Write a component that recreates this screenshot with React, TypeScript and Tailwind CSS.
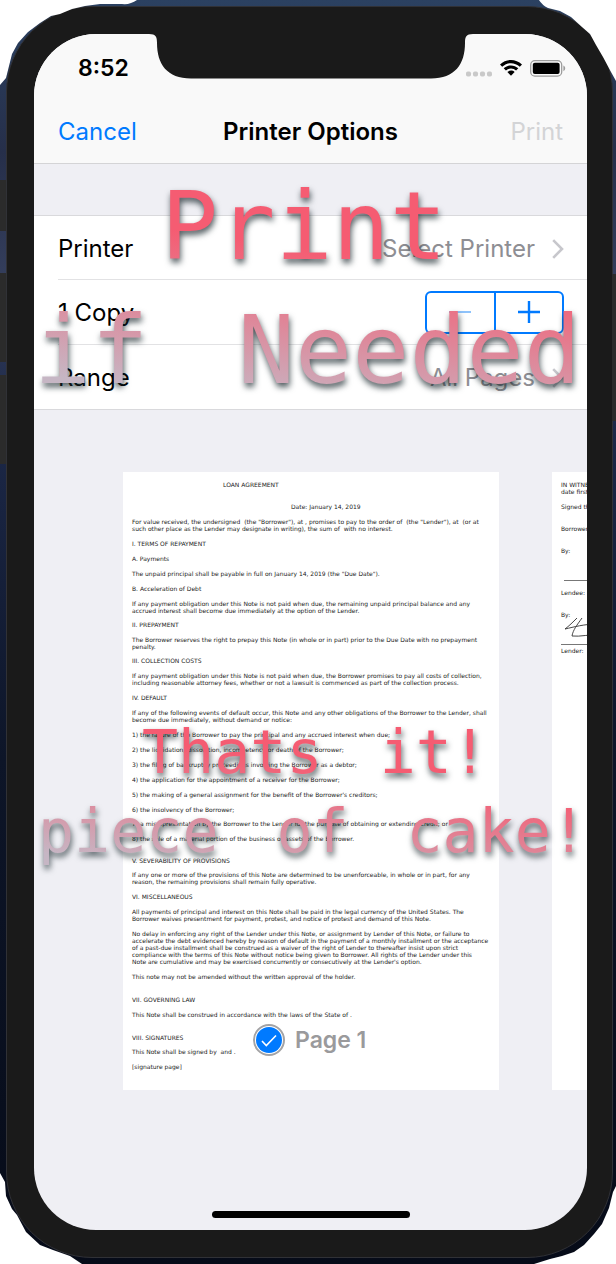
import React from "react";

const SANS = "font-[Inter,'Liberation_Sans',sans-serif]";
const MONO = "font-['DejaVu_Sans_Mono',monospace]";
const PAPER =
  "w-[376px] shrink-0 whitespace-pre bg-white px-[9px] pb-[20px] pt-[9px] font-['DejaVu_Sans',sans-serif] text-[6px] leading-[7px] text-[#222]";

type Block = { lines: string[]; space: string };

const tight = "mt-[7px]";
const normal = "mt-[8px]";
const loose = "mt-[16px]";

const agreement: Block[] = [
  { space: "pl-[91px]", lines: ["LOAN AGREEMENT"] },
  { space: "mt-[15px] pl-[159px]", lines: ["Date: January 14, 2019"] },
  {
    space: normal,
    lines: [
      'For value received, the undersigned  (the "Borrower"), at , promises to pay to the order of  (the "Lender"), at  (or at',
      "such other place as the Lender may designate in writing), the sum of  with no interest.",
    ],
  },
  { space: normal, lines: ["I. TERMS OF REPAYMENT"] },
  { space: normal, lines: ["A. Payments"] },
  { space: normal, lines: ['The unpaid principal shall be payable in full on January 14, 2019 (the "Due Date").'] },
  { space: normal, lines: ["B. Acceleration of Debt"] },
  {
    space: normal,
    lines: [
      "If any payment obligation under this Note is not paid when due, the remaining unpaid principal balance and any",
      "accrued interest shall become due immediately at the option of the Lender.",
    ],
  },
  { space: tight, lines: ["II. PREPAYMENT"] },
  {
    space: normal,
    lines: [
      "The Borrower reserves the right to prepay this Note (in whole or in part) prior to the Due Date with no prepayment",
      "penalty.",
    ],
  },
  { space: tight, lines: ["III. COLLECTION COSTS"] },
  {
    space: normal,
    lines: [
      "If any payment obligation under this Note is not paid when due, the Borrower promises to pay all costs of collection,",
      "including reasonable attorney fees, whether or not a lawsuit is commenced as part of the collection process.",
    ],
  },
  { space: normal, lines: ["IV. DEFAULT"] },
  {
    space: normal,
    lines: [
      "If any of the following events of default occur, this Note and any other obligations of the Borrower to the Lender, shall",
      "become due immediately, without demand or notice:",
    ],
  },
  { space: normal, lines: ["1) the failure of the Borrower to pay the principal and any accrued interest when due;"] },
  { space: normal, lines: ["2) the liquidation, dissolution, incompetency or death of the Borrower;"] },
  { space: normal, lines: ["3) the filing of bankruptcy proceedings involving the Borrower as a debtor;"] },
  { space: normal, lines: ["4) the application for the appointment of a receiver for the Borrower;"] },
  { space: normal, lines: ["5) the making of a general assignment for the benefit of the Borrower's creditors;"] },
  { space: normal, lines: ["6) the insolvency of the Borrower;"] },
  { space: tight, lines: ["7) a misrepresentation by the Borrower to the Lender for the purpose of obtaining or extending credit; or"] },
  { space: normal, lines: ["8) the sale of a material portion of the business or assets of the Borrower."] },
  { space: "mt-[15px]", lines: ["V. SEVERABILITY OF PROVISIONS"] },
  {
    space: tight,
    lines: [
      "If any one or more of the provisions of this Note are determined to be unenforceable, in whole or in part, for any",
      "reason, the remaining provisions shall remain fully operative.",
    ],
  },
  { space: normal, lines: ["VI. MISCELLANEOUS"] },
  {
    space: normal,
    lines: [
      "All payments of principal and interest on this Note shall be paid in the legal currency of the United States. The",
      "Borrower waives presentment for payment, protest, and notice of protest and demand of this Note.",
    ],
  },
  {
    space: normal,
    lines: [
      "No delay in enforcing any right of the Lender under this Note, or assignment by Lender of this Note, or failure to",
      "accelerate the debt evidenced hereby by reason of default in the payment of a monthly installment or the acceptance",
      "of a past-due installment shall be construed as a waiver of the right of Lender to thereafter insist upon strict",
      "compliance with the terms of this Note without notice being given to Borrower. All rights of the Lender under this",
      "Note are cumulative and may be exercised concurrently or consecutively at the Lender's option.",
    ],
  },
  { space: normal, lines: ["This note may not be amended without the written approval of the holder."] },
  { space: loose, lines: ["VII. GOVERNING LAW"] },
  { space: normal, lines: ["This Note shall be construed in accordance with the laws of the State of ."] },
  { space: loose, lines: ["VIII. SIGNATURES"] },
  { space: tight, lines: ["This Note shall be signed by  and ."] },
  { space: normal, lines: ["[signature page]"] },
];

function Paragraph({ block }: { block: Block }) {
  return (
    <p className={block.space}>
      {block.lines.map((line) => (
        <span key={line} className="block">
          {line}
        </span>
      ))}
    </p>
  );
}

function Chevron() {
  return (
    <svg width="12" height="20" viewBox="0 0 12 20" fill="none" stroke="#c7c7cc" strokeWidth="2.6" aria-hidden="true">
      <path d="M1.2 1.2 L10 10 L1.2 18.8" />
    </svg>
  );
}

function StatusBar() {
  return (
    <div className="flex h-[65px] items-center justify-between pl-[44px] pr-[21px] pt-[3px]">
      <span className="text-[23px] font-semibold leading-[28px]">8:52</span>
      <div className="flex items-center gap-[8px]">
        <svg width="26" height="6" viewBox="0 0 26 6" fill="#c9c9c9" className="mt-[12px]" aria-hidden="true">
          <rect x="0" y="0.5" width="5" height="5" rx="1.8" />
          <rect x="7" y="0.5" width="5" height="5" rx="1.8" />
          <rect x="14" y="0.5" width="5" height="5" rx="1.8" />
          <rect x="21" y="0.5" width="5" height="5" rx="1.8" />
        </svg>
        <svg width="22" height="16" viewBox="0 0 22 16" aria-hidden="true">
          <path d="M0 4.6 C6.2 -1.5 15.8 -1.5 22 4.6 L19.8 6.8 C14.8 2 7.2 2 2.2 6.8 Z" />
          <path d="M3.7 8.3 C7.8 4.4 14.2 4.4 18.3 8.3 L16.1 10.5 C13.2 7.8 8.8 7.8 5.9 10.5 Z" />
          <path d="M7.4 12 C9.4 10.1 12.6 10.1 14.6 12 L11 15.8 Z" />
        </svg>
        <svg width="36" height="17" viewBox="0 0 36 17" aria-hidden="true">
          <rect x="0.7" y="0.7" width="31" height="15.4" rx="4.2" fill="none" stroke="#9c9c9c" strokeWidth="1.3" />
          <rect x="2.8" y="2.8" width="26.8" height="11.2" rx="2" />
          <path d="M33.4 5.6 C35.8 6.6 35.8 10.2 33.4 11.2 Z" fill="#9c9c9c" />
        </svg>
      </div>
    </div>
  );
}

function Notch() {
  return (
    <svg
      className="absolute left-1/2 top-0 -translate-x-1/2"
      width="324"
      height="45"
      viewBox="0 0 324 45"
      fill="#1a1a1a"
      aria-hidden="true"
    >
      <path d="M0 0 C7 0 8 3 8 9 C8 30 18 44.500 42 44.500 H282 C306 44.500 316 30 316 9 C316 3 317 0 324 0 Z" />
    </svg>
  );
}

function Preview() {
  return (
    <div className="relative mt-[62px] flex items-stretch gap-[53px] pl-[89px]">
      <div className={PAPER}>
        {agreement.map((block) => (
          <Paragraph key={block.lines[0]} block={block} />
        ))}
      </div>
      <div className={PAPER}>
        <p>{"IN WITNESS WHEREOF, this Note has been executed\ndate first written above."}</p>
        <p className="mt-[8px]">Signed this day</p>
        <p className="mt-[15px]">Borrower:</p>
        <p className="mt-[15px]">By:</p>
        <div className="ml-[3px] mt-[26px] w-[160px] border-t border-[#777]" />
        <p className="mt-[8px]">Lendee:</p>
        <p className="mt-[15px]">By:</p>
        <svg width="60" height="20" viewBox="0 0 60 20" className="ml-[3px]" fill="none" stroke="#333" strokeWidth="0.9" aria-hidden="true">
          <path d="M13 0 C9 4 5 8 1 11 C10 9 20 6 34 6 M18 0 C13 7 9 12 8 18 C16 19 26 16 36 17" />
        </svg>
        <div className="mt-[6px] w-[160px] border-t border-[#777]" />
        <p className="mt-[2px]">Lender:</p>
      </div>
      <label className="absolute bottom-[34px] left-[219px] flex items-center gap-[10px] bg-white/80 pr-[6px]">
        <span className="relative flex size-[32px] items-center justify-center rounded-full border-2 border-[#a3a3a5] bg-white">
          <input type="checkbox" defaultChecked className="size-[26px] appearance-none rounded-full bg-[#007aff]" />
          <svg className="pointer-events-none absolute" width="16" height="13" viewBox="0 0 16 13" fill="none" stroke="#fff" strokeWidth="1.6" aria-hidden="true">
            <path d="M1 7 L5.3 11.5 L15 1.5" />
          </svg>
        </span>
        <span className="text-[23px] font-semibold leading-[28px] text-[#9a9a9c]">Page 1</span>
      </label>
    </div>
  );
}

function Captions() {
  const shade = "bg-clip-text text-transparent drop-shadow-[1px_4px_3px_rgba(20,35,40,0.75)]";
  return (
    <div className={`pointer-events-none absolute inset-x-0 top-[130px] flex flex-col gap-[301px] ${MONO}`}>
      <div className={`bg-[linear-gradient(188deg,#f55c72_38%,#c6b6c4_88%)] text-[95px] leading-[124px] ${shade}`}>
        <p className="pl-[127px]">Print</p>
        <p className="flex justify-between pr-[6px]">
          <span>if</span>
          <span>Needed</span>
        </p>
      </div>
      <div className={`bg-[linear-gradient(188deg,#f55c72_38%,#c6b6c4_92%)] text-[60px] leading-[79px] ${shade}`}>
        <p className="flex gap-[57px] pl-[108px]">
          <span>Thats</span>
          <span>it!</span>
        </p>
        <p className="flex justify-between pl-[4px]">
          <span>piece</span>
          <span>of</span>
          <span>cake!</span>
        </p>
      </div>
    </div>
  );
}

function Screen() {
  return (
    <main className="relative flex grow flex-col overflow-hidden rounded-[62px] bg-[#efeff4] text-black">
      <header className="border-b border-[#d4d4d6] bg-[#f9f9f9]">
        <StatusBar />
        <div className="grid h-[64px] grid-cols-[1fr_auto_1fr] items-center px-[24px] pt-[2px] text-[24px] leading-[32px]">
          <button className="justify-self-start text-[#007aff]">Cancel</button>
          <h1 className="font-semibold">Printer Options</h1>
          <button disabled className="justify-self-end text-[#d3d4d6]">
            Print
          </button>
        </div>
      </header>
      <Notch />
      <section className="mt-[51px] border-y border-[#d9d9dc] bg-white pl-[24px] text-[24px] leading-[32px]">
        <button className="flex h-[64px] w-full items-center justify-between border-b border-[#e2e2e4] pr-[23px] pt-[2px]">
          <span>Printer</span>
          <span className="flex items-center gap-[17px] text-[#8e8e93]">
            Select Printer
            <Chevron />
          </span>
        </button>
        <div className="flex h-[65px] items-center justify-between border-b border-[#e2e2e4] pr-[23px]">
          <span className="pt-[2px]">1 Copy</span>
          <div className="flex h-[43px] w-[139px] divide-x-2 divide-[#007aff] rounded-[6px] border-2 border-[#007aff]">
            <button aria-label="Fewer copies" disabled className="flex flex-1 items-center justify-center">
              <span className="h-[2px] w-[22px] bg-[#8fc3fb]" />
            </button>
            <button aria-label="More copies" className="flex flex-1 items-center justify-center">
              <svg width="22" height="22" viewBox="0 0 22 22" stroke="#007aff" strokeWidth="2.4" aria-hidden="true">
                <path d="M0 11 H22 M11 0 V22" />
              </svg>
            </button>
          </div>
        </div>
        <button className="flex h-[64px] w-full items-center justify-between pr-[23px] pt-[2px]">
          <span>Range</span>
          <span className="flex items-center gap-[17px] text-[#8e8e93]">
            All Pages
            <Chevron />
          </span>
        </button>
      </section>
      <Preview />
      <Captions />
      <div className="mx-auto mb-[12px] mt-auto h-[7px] w-[198px] rounded-full bg-black" />
    </main>
  );
}

function Corners() {
  return (
    <>
      <svg className="absolute left-0 top-0" width="140" height="90" fill="#fff" aria-hidden="true">
        <path d="M0 0 H137 Q130 5 122 4 H100 L85 6 L72 9 L60 14 L51 16 L40 23 L28 32 L18 43 L12 54 L9 66 L6 78 L0 85 Z" />
      </svg>
      <svg className="absolute right-0 top-0" width="80" height="90" fill="#fff" aria-hidden="true">
        <path d="M80 0 H3 Q6 5 12 8 L24 11 L35 17 L46 27 L54 34 L60 45 L67 57 L75 72 L80 81 Z" />
      </svg>
      <svg className="absolute bottom-0 left-0" width="90" height="94" fill="#fff" aria-hidden="true">
        <path d="M0 94 V3 L5 12 L6 26 L12 39 L17 45 L26 62 L40 75 L53 80 L70 86 L82 94 Z" />
      </svg>
      <svg className="absolute bottom-0 right-0" width="90" height="80" fill="#fff" aria-hidden="true">
        <path d="M90 80 V2 L87 8 L83 24 L76 40 L68 50 L58 61 L48 68 L36 72 L24 75 L8 80 Z" />
      </svg>
    </>
  );
}

export default function App() {
  return (
    <div
      className={`relative flex min-h-screen flex-col bg-[linear-gradient(180deg,#2b4161_0%,#262f4a_12%,#343e5c_22%,#1c2848_34%,#0d1528_60%,#060b18_100%)] pb-[6px] pl-[6px] pr-[3px] pt-[6px] ${SANS}`}
    >
      <div className="relative flex grow flex-col rounded-[86px] border border-[#303136] bg-[#1a1a1a] pb-[27px] pl-[27px] pr-[25px] pt-[27px]">
        <Screen />
      </div>
      <div className="absolute left-0 top-[180px] h-[51px] w-[6px] bg-[#2b2b2b]" />
      <div className="absolute left-0 top-[273px] h-[89px] w-[6px] bg-[#2b2b2b]" />
      <div className="absolute left-0 top-[375px] h-[89px] w-[6px] bg-[#2b2b2b]" />
      <div className="absolute right-0 top-[274px] h-[147px] w-[4px] bg-[#2b2b2b]" />
      <Corners />
    </div>
  );
}
